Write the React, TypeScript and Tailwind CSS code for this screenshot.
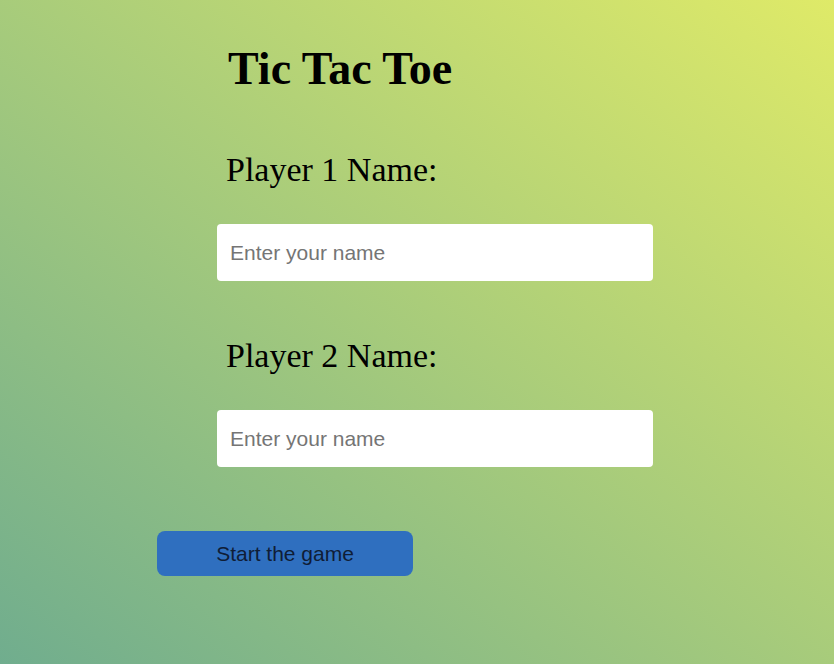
export default function App() {
  return (
    <div className="min-h-[664px] w-full bg-[linear-gradient(to_top_right,#70ad8e,#dfea68)] pl-[157px] pt-[46px]">
      <div className="ml-[60px] flex w-[436px] flex-col">
        <h1 className="ml-[11px] text-[46px] font-bold leading-none text-black [font-family:'Liberation_Serif',serif]">
          Tic Tac Toe
        </h1>
        <label className="ml-[9px] mt-[61px] text-[34px] leading-none text-black [font-family:'Liberation_Serif',serif]">
          Player 1 Name:
        </label>
        <input
          type="text"
          placeholder="Enter your name"
          className="mt-[37px] h-[57px] w-[436px] rounded-[4px] bg-white px-[13px] text-[21px] text-black outline-none placeholder:text-[#757575] [font-family:'Liberation_Sans',sans-serif]"
        />
        <label className="ml-[9px] mt-[58px] text-[34px] leading-none text-black [font-family:'Liberation_Serif',serif]">
          Player 2 Name:
        </label>
        <input
          type="text"
          placeholder="Enter your name"
          className="mt-[37px] h-[57px] w-[436px] rounded-[4px] bg-white px-[13px] text-[21px] text-black outline-none placeholder:text-[#757575] [font-family:'Liberation_Sans',sans-serif]"
        />
      </div>
      <button className="mt-[64px] flex h-[45px] w-[256px] items-center justify-center rounded-[8px] bg-[#2f6fbf] text-[21px] text-[#0f1d36] [font-family:'Liberation_Sans',sans-serif]">
        Start the game
      </button>
    </div>
  );
}
